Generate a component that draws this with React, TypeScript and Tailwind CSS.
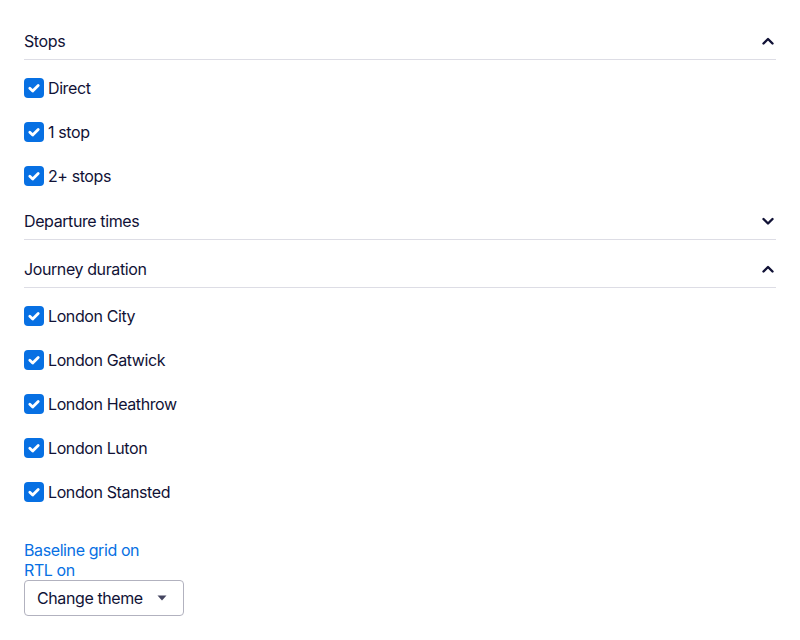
import React, { useState } from 'react';

type Section = {
  id: string;
  title: string;
  options: string[];
};

const SECTIONS: Section[] = [
  { id: 'stops', title: 'Stops', options: ['Direct', '1 stop', '2+ stops'] },
  { id: 'departure', title: 'Departure times', options: [] },
  {
    id: 'duration',
    title: 'Journey duration',
    options: ['London City', 'London Gatwick', 'London Heathrow', 'London Luton', 'London Stansted'],
  },
];

const Chevron: React.FC<{ up: boolean }> = ({ up }) => (
  <svg width="14" height="14" viewBox="0 0 14 14" className="text-[#111236]">
    <path
      d={up ? 'M2.5 9.5 L7 5 L11.5 9.5' : 'M2.5 5 L7 9.5 L11.5 5'}
      fill="none"
      stroke="currentColor"
      strokeWidth="2.4"
      strokeLinecap="round"
      strokeLinejoin="round"
    />
  </svg>
);

const Checkbox: React.FC<{ label: string; checked: boolean; onToggle: () => void }> = ({ label, checked, onToggle }) => (
  <label className="flex items-center h-11 gap-1 cursor-pointer select-none" onClick={onToggle}>
    <span
      className={
        checked
          ? 'flex items-center justify-center w-5 h-5 rounded-[4px] bg-[#0770e3]'
          : 'flex items-center justify-center w-5 h-5 rounded-[4px] border-2 border-[#b2b2bf] bg-white'
      }
    >
      {checked && (
        <svg width="14" height="14" viewBox="0 0 14 14">
          <path d="M2.8 7.2 L5.7 10 L11.2 4.4" fill="none" stroke="white" strokeWidth="2.8" strokeLinecap="round" strokeLinejoin="round" />
        </svg>
      )}
    </span>
    <span className="text-base leading-6 tracking-[-0.4px] text-[#111236]">{label}</span>
  </label>
);

const App: React.FC = () => {
  const [checked, setChecked] = useState<Record<string, boolean>>(() => {
    const all: Record<string, boolean> = {};
    SECTIONS.forEach(s => s.options.forEach(o => (all[s.id + o] = true)));
    return all;
  });

  const toggle = (key: string) => setChecked(prev => ({ ...prev, [key]: !prev[key] }));

  return (
    <div className="min-h-screen bg-white px-6 pt-[18px] font-['Inter',sans-serif] text-[#111236]">
      {SECTIONS.map(section => {
        const open = section.options.length > 0;
        return (
          <div key={section.id} className={open ? '' : 'pb-[6px]'}>
            <div className="flex items-center justify-between pt-[11px] pb-[6px] border-b border-[#dddde5]">
              <span className="text-base leading-6 tracking-[-0.4px]">{section.title}</span>
              <span className="mr-[1px]">
                <Chevron up={open} />
              </span>
            </div>
            {open && (
              <div className="pt-[6px]">
                {section.options.map(option => (
                  <Checkbox
                    key={option}
                    label={option}
                    checked={!!checked[section.id + option]}
                    onToggle={() => toggle(section.id + option)}
                  />
                ))}
              </div>
            )}
          </div>
        );
      })}

      <div className="mt-[26px] flex flex-col items-start">
        <button className="text-base leading-5 tracking-[-0.4px] text-[#0770e3]">Baseline grid on</button>
        <button className="text-base leading-5 tracking-[-0.4px] text-[#0770e3]">RTL on</button>
        <button className="flex items-center w-40 h-9 pl-3 pr-4 border border-[#b2b2bf] rounded-[4px] bg-white text-base tracking-[-0.4px] text-[#111236]">
          <span className="flex-1 text-left">Change theme</span>
          <svg width="10" height="6" viewBox="0 0 10 6">
            <path d="M0.5 0.5 L9.5 0.5 L5 5.5 Z" fill="#444560" />
          </svg>
        </button>
      </div>
    </div>
  );
};

export default App;
